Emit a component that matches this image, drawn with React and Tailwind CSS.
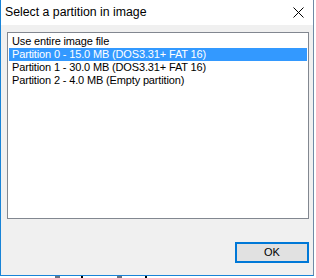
import React from 'react'

const rows = [
  'Use entire image file',
  'Partition 0 - 15.0 MB (DOS3.31+ FAT 16)',
  'Partition 1 - 30.0 MB (DOS3.31+ FAT 16)',
  'Partition 2 - 4.0 MB (Empty partition)',
]

const App = () => {
  const selected = 1

  return (
    <div className="w-[316px] h-[278px] bg-white overflow-hidden font-['Liberation_Sans',Arial,sans-serif] text-black">
      <div className="w-[314px] h-[276px] flex flex-col border-l border-b border-r border-l-[#1883d7] border-b-[#1883d7] border-r-[#6f8aa6]">
        {/* title bar */}
        <div className="h-[25px] flex items-center justify-between bg-white pl-[4px] pr-[9px]">
          <span className="text-[12.3px] leading-none">Select a partition in image</span>
          <svg width="11" height="11" viewBox="0 0 11 11" className="block">
            <path d="M0.5 0.5 L10.5 10.5 M10.5 0.5 L0.5 10.5" stroke="#000" strokeWidth="1" fill="none" />
          </svg>
        </div>

        {/* body */}
        <div className="flex-1 bg-[#f0f0f0] pt-[7px] pl-[6px] pr-[4px] flex flex-col">
          <div className="h-[187px] bg-white border border-[#828790] px-px pt-[2px]">
            {rows.map((r, i) => (
              <div
                key={r}
                className={`h-[13px] leading-[13px] pl-[3px] text-[11px] tracking-[-0.15px] whitespace-nowrap ${
                  i === selected ? 'bg-[#3399ff] text-white' : ''
                }`}
              >
                {r}
              </div>
            ))}
          </div>

          <div className="flex justify-end mt-[23px]">
            <button className="w-[74px] h-[21px] border-2 border-[#0078d7] bg-[#e1e1e1] text-[11px] leading-none flex items-center justify-center">
              OK
            </button>
          </div>
        </div>
      </div>
      {/* bits of the window behind */}
      <div className="flex h-[2px] items-start">
        <div className="w-[55px]" />
        <div className="w-[5px] h-[2px] bg-[#6b7280]" />
        <div className="w-[21px]" />
        <div className="w-[2px] h-[2px] bg-black" />
        <div className="w-[34px]" />
        <div className="w-[5px] h-[2px] bg-[#6b7280]" />
        <div className="w-[23px]" />
        <div className="w-[2px] h-[2px] bg-black" />
      </div>
    </div>
  )
}

export default App
